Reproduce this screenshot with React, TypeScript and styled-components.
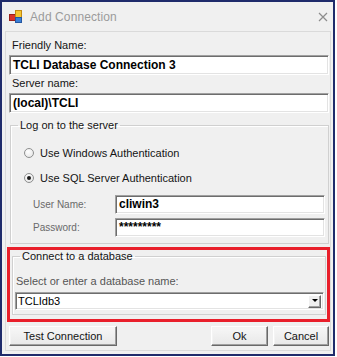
import React from "react";
import styled, { createGlobalStyle } from "styled-components";

// === global ===

const GlobalStyle = createGlobalStyle`
  html, body {
    margin: 0;
    padding: 0;
    background: #ffffff;
  }
  body {
    font-family: "Liberation Sans", Arial, sans-serif;
    font-size: 11px;
    color: #141414;
  }
  * {
    box-sizing: border-box;
  }
`;

// === window frame ===

const Window = styled.div`
  width: 335px;
  height: 356px;
  border: 2px solid #1f2b6b;
  background: #f0f0f0;
  display: flex;
  flex-direction: column;
`;

const TitleBar = styled.div`
  height: 29px;
  flex: none;
  display: flex;
  align-items: center;
  padding: 0 5px 0 7px;
  gap: 8px;
`;

const TitleText = styled.span`
  flex: 1;
  font-size: 12px;
  color: #9b9b9b;
  letter-spacing: 0.1px;
`;

const Client = styled.div`
  flex: 1;
  margin: 0 2px 3px 3px;
  border: 1px solid #dadada;
  display: flex;
  flex-direction: column;
`;

// === form parts ===

const Label = styled.div<{ $top?: number; $muted?: boolean; $indent?: number }>`
  height: 14px;
  line-height: 14px;
  margin-top: ${(p) => p.$top ?? 0}px;
  padding-left: ${(p) => p.$indent ?? 6}px;
  color: ${(p) => (p.$muted ? "#555555" : "#141414")};
  white-space: nowrap;
`;

const TextBox = styled.div<{ $top?: number }>`
  height: 20px;
  margin: ${(p) => p.$top ?? 0}px 1px 0 3px;
  background: #ffffff;
  border-style: solid;
  border-width: 1px;
  border-color: #a0a0a0 #ffffff #ffffff #a0a0a0;
  box-shadow: inset 1px 1px 0 #6d6d6d, inset -1px -1px 0 #e3e3e3;
  padding: 0 3px;
  font-size: 12px;
  font-weight: bold;
  line-height: 18px;
  color: #000;
  white-space: nowrap;
  overflow: hidden;
`;

const GroupBox = styled.fieldset<{ $top?: number; $left: number; $right: number; $bottom?: number }>`
  margin: ${(p) => p.$top ?? 0}px ${(p) => p.$right}px ${(p) => p.$bottom ?? 0}px
    ${(p) => p.$left}px;
  padding: 0;
  border: 1px solid #d0d0d0;
  box-shadow: inset 1px 1px 0 #ffffff;
  min-width: 0;

  legend {
    margin-left: 7px;
    padding: 0 2px;
    line-height: 13px;
    font-size: 11px;
    color: #141414;
  }
`;

const GroupBody = styled.div<{ $pad: string }>`
  padding: ${(p) => p.$pad};
  display: flex;
  flex-direction: column;
`;

const RadioRow = styled.div<{ $top?: number }>`
  display: flex;
  align-items: center;
  gap: 6px;
  height: 14px;
  margin-top: ${(p) => p.$top ?? 0}px;
  white-space: nowrap;
`;

const RadioDot = styled.span<{ $checked?: boolean }>`
  width: 10px;
  height: 10px;
  border-radius: 50%;
  border: 1px solid #8e8f8f;
  background: radial-gradient(circle at 40% 35%, #ffffff 0%, #eaeaea 70%, #d6d6d6 100%);
  display: flex;
  align-items: center;
  justify-content: center;

  &::after {
    content: "";
    width: 4px;
    height: 4px;
    border-radius: 50%;
    background: ${(p) => (p.$checked ? "#1a1a1a" : "transparent")};
  }
`;

const FieldRow = styled.div<{ $top?: number }>`
  display: flex;
  align-items: center;
  margin-top: ${(p) => p.$top ?? 0}px;
  padding-left: 22px;
  padding-right: 3px;
`;

const FieldLabel = styled.span`
  width: 82px;
  font-size: 10px;
  color: #6a6a6a;
  flex: none;
`;

const FieldBox = styled(TextBox)`
  flex: 1;
  height: 19px;
  margin: 0;
  line-height: 17px;
`;

const Highlight = styled.div`
  margin: 3px 0 0 1px;
  border: 3px solid #e91f2b;
`;

const Combo = styled.div`
  height: 18px;
  margin: 4px 1px 0 0;
  background: #ffffff;
  border-style: solid;
  border-width: 1px;
  border-color: #a0a0a0 #ffffff #ffffff #a0a0a0;
  box-shadow: inset 1px 1px 0 #6d6d6d, inset -1px -1px 0 #e3e3e3;
  display: flex;
  align-items: center;
  padding: 0 2px 0 2px;
  color: #000;
`;

const ComboText = styled.span`
  flex: 1;
`;

const ComboButton = styled.span`
  width: 13px;
  height: 13px;
  background: #f0f0f0;
  border-style: solid;
  border-width: 1px;
  border-color: #ffffff #696969 #696969 #ffffff;
  box-shadow: inset -1px -1px 0 #a0a0a0;
  display: flex;
  align-items: center;
  justify-content: center;

  &::after {
    content: "";
    border-left: 3px solid transparent;
    border-right: 3px solid transparent;
    border-top: 3px solid #000;
    margin-bottom: 1px;
  }
`;

const ButtonBar = styled.div`
  display: flex;
  gap: 5px;
  margin: 4px 1px 0 3px;
`;

const Button = styled.button<{ $w: number }>`
  width: ${(p) => p.$w}px;
  height: 20px;
  padding: 0;
  font-family: "Liberation Sans", Arial, sans-serif;
  font-size: 11px;
  color: #141414;
  background: linear-gradient(#f7f7f7, #e8e8e8);
  border-style: solid;
  border-width: 1px;
  border-color: #ffffff #696969 #696969 #ffffff;
  box-shadow: inset -1px -1px 0 #a0a0a0, inset 1px 1px 0 #f4f4f4;
`;

const Spacer = styled.div<{ $h?: number }>`
  flex: ${(p) => (p.$h ? "none" : "1")};
  height: ${(p) => p.$h ?? 0}px;
`;

// === icons ===

const AppIcon = () => (
  <svg width="13" height="13" viewBox="0 0 13 13">
    <rect x="0.5" y="4.5" width="6" height="6" fill="#d8322c" stroke="#9c1f1a" />
    <rect x="6.5" y="0.5" width="6" height="7" fill="#f4c531" stroke="#c28a12" />
    <rect x="6.5" y="7.5" width="6" height="5" fill="#3b7fd6" stroke="#2557a0" />
  </svg>
);

const CloseIcon = () => (
  <svg width="10" height="10" viewBox="0 0 10 10">
    <path d="M1 1 L9 9 M9 1 L1 9" stroke="#8c8c8c" strokeWidth="1.2" />
  </svg>
);

const App = () => {
  return (
    <>
      <GlobalStyle />
      <Window>
        <TitleBar>
          <AppIcon />
          <TitleText>Add Connection</TitleText>
          <CloseIcon />
        </TitleBar>

        <Client>
          <Label $top={6}>Friendly Name:</Label>
          <TextBox $top={3}>TCLI Database Connection 3</TextBox>
          <Label $top={1}>Server name:</Label>
          <TextBox $top={3}>(local)\TCLI</TextBox>

          <GroupBox $top={6} $left={4} $right={1}>
            <legend>Log on to the server</legend>
            <GroupBody $pad="14px 0 0 13px">
              <RadioRow>
                <RadioDot />
                Use Windows Authentication
              </RadioRow>
              <RadioRow $top={11}>
                <RadioDot $checked />
                Use SQL Server Authentication
              </RadioRow>
            </GroupBody>
            <FieldRow $top={10}>
              <FieldLabel>User Name:</FieldLabel>
              <FieldBox>cliwin3</FieldBox>
            </FieldRow>
            <FieldRow $top={4}>
              <FieldLabel>Password:</FieldLabel>
              <FieldBox>*********</FieldBox>
            </FieldRow>
            <Spacer $h={6} />
          </GroupBox>

          <Highlight>
            <GroupBox $left={2} $right={1} $bottom={4}>
              <legend>Connect to a database</legend>
              <GroupBody $pad="11px 0 4px 2px">
                <Label $muted $indent={1}>
                  Select or enter a database name:
                </Label>
                <Combo>
                  <ComboText>TCLIdb3</ComboText>
                  <ComboButton />
                </Combo>
              </GroupBody>
            </GroupBox>
          </Highlight>

          <ButtonBar>
            <Button $w={108}>Test Connection</Button>
            <Spacer />
            <Button $w={57}>Ok</Button>
            <Button $w={56}>Cancel</Button>
          </ButtonBar>
        </Client>
      </Window>
    </>
  );
};

export default App;
